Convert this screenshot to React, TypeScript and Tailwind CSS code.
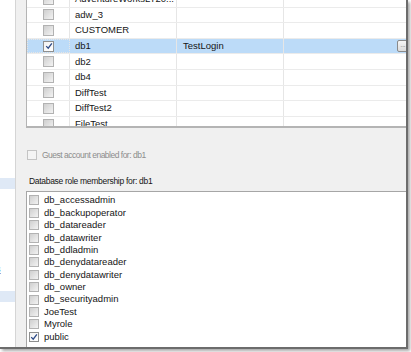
import React from "react";

const rows = [
  { name: "AdventureWorksLT20...", login: "", checked: false },
  { name: "adw_3", login: "", checked: false },
  { name: "CUSTOMER", login: "", checked: false },
  { name: "db1", login: "TestLogin", checked: true, selected: true },
  { name: "db2", login: "", checked: false },
  { name: "db4", login: "", checked: false },
  { name: "DiffTest", login: "", checked: false },
  { name: "DiffTest2", login: "", checked: false },
  { name: "FileTest", login: "", checked: false },
];

const roles = [
  "db_accessadmin",
  "db_backupoperator",
  "db_datareader",
  "db_datawriter",
  "db_ddladmin",
  "db_denydatareader",
  "db_denydatawriter",
  "db_owner",
  "db_securityadmin",
  "JoeTest",
  "Myrole",
  "public",
];

function Check({ checked, size = "w-[11px] h-[11px]" }: { checked: boolean; size?: string }) {
  if (checked) {
    return (
      <span className={`${size} flex items-center justify-center border border-[#8e8f8f] bg-gradient-to-br from-[#f2f2f2] to-white`}>
        <svg viewBox="0 0 10 10" className="w-[8px] h-[8px]">
          <path d="M1.5 5.2 L4 7.8 L8.6 1.6" fill="none" stroke="#2c4a87" strokeWidth="1.6" />
        </svg>
      </span>
    );
  }
  return (
    <span className={`${size} block border border-[#b2b2b2] bg-gradient-to-br from-[#cfcfcf] to-[#f3f3f3]`} />
  );
}

export default function App() {
  return (
    <div className="w-[411px] h-[352px] bg-white overflow-hidden font-['Liberation_Sans',Arial,sans-serif] text-[9.5px] text-[#151515]">
      <div className="w-[408px] h-[349px] flex border-r-2 border-b-2 border-[#6c6c6c] shadow-[2px_2px_3px_rgba(0,0,0,0.35)] overflow-hidden">
        {/* left nav strip */}
        <div className="w-[16px] shrink-0 bg-white border-r border-[#d5d5d5] flex flex-col">
          <div className="h-[178px]" />
          <div className="h-[11px] bg-[#dfe9f6]" />
          <div className="h-[76px]" />
          <div className="text-[#2355b8] underline leading-none -ml-[4px] text-[9px]">s</div>
          <div className="h-[17px]" />
          <div className="h-[11px] bg-[#dfe9f6]" />
        </div>

        {/* main panel */}
        <div className="flex-1 bg-[#f0f0f0] flex flex-col pl-[10px]">
          {/* grid */}
          <div className="h-[128px] shrink-0 bg-white border-l border-b-2 border-[#b4b4b4] overflow-hidden">
            <div className="-mt-[8px]">
              {rows.map((r) => (
                <div
                  key={r.name}
                  className={`h-[15.6px] flex border-b border-[#ebebeb] ${r.selected ? "bg-[#bcdbf8]" : ""}`}
                >
                  <div
                    className={`w-[43px] shrink-0 flex items-center justify-center border-r border-[#e6e6e6] ${
                      r.selected ? "border border-dotted border-[#5a5a5a]" : ""
                    }`}
                  >
                    <Check checked={r.checked} />
                  </div>
                  <div className="w-[107px] shrink-0 flex items-center pl-[5px] border-r border-[#e6e6e6] whitespace-nowrap overflow-hidden">
                    {r.name}
                  </div>
                  <div className="w-[107px] shrink-0 flex items-center pl-[6px] border-r border-[#e6e6e6]">
                    {r.login}
                  </div>
                  <div className="flex-1 flex items-center justify-end">
                    {r.selected && (
                      <span className="w-[12px] h-[12px] mr-[-3px] rounded-[2px] border border-[#8a8a8a] bg-gradient-to-b from-[#f6f6f6] to-[#dcdcdc] text-[6px] leading-[8px] text-[#444] flex justify-center">
                        ...
                      </span>
                    )}
                  </div>
                </div>
              ))}
            </div>
          </div>

          {/* guest checkbox */}
          <div className="mt-[21px] flex items-center gap-[5px] pl-[1px] text-[#8d8d8d] text-[8.5px] tracking-[-0.5px]">
            <span className="w-[10px] h-[10px] block border border-[#c4c4c4] bg-[#f4f4f4]" />
            <span>Guest account enabled for: db1</span>
          </div>

          {/* role membership */}
          <div className="mt-[15px] pl-[3px] leading-none text-[8.5px] tracking-[-0.3px]">Database role membership for: db1</div>
          <div className="mt-[6px] flex-1 bg-white border-l border-t border-[#a6a6a6] pt-[2px] pl-[2px] text-[9.5px]">
            {roles.map((role) => (
              <div key={role} className="h-[12.4px] flex items-center gap-[5px]">
                <Check checked={role === "public"} size="w-[10px] h-[10px]" />
                <span>{role}</span>
              </div>
            ))}
          </div>
        </div>
      </div>
    </div>
  );
}
